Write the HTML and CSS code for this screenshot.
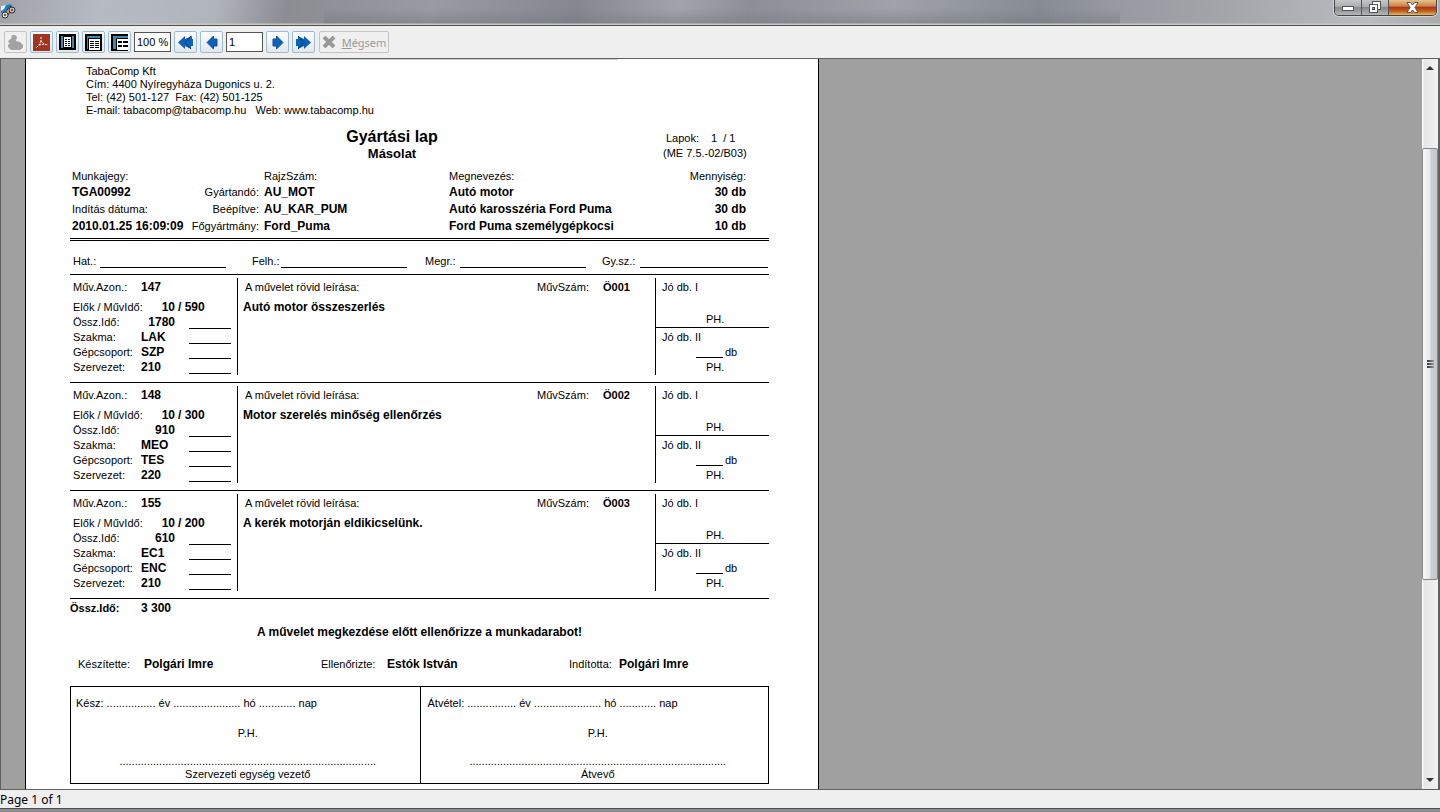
FILE: index.html
```
<!DOCTYPE html>
<html lang="hu">
<head>
    <meta charset="UTF-8">
    <meta name="viewport" content="width=device-width, initial-scale=1.0">
    <title>Gyártási lap</title>
    <link rel="stylesheet" href="styles.css">
</head>
<body>
<header class="titlebar">
    <svg class="app-icon" width="16" height="16" viewBox="0 0 16 16">
        <path d="M1 3L11 1L13 5L9 8L1 10Z" fill="#1d7fd6"/>
        <path d="M1 3L6 2L4 6L1 8Z" fill="#e8f6ff"/>
        <path d="M5 10L10 3L12 5L8 12Z" fill="#e0a860" stroke="#333"/>
        <circle cx="12" cy="7" r="3" fill="#bbb" stroke="#333"/>
        <circle cx="12" cy="7" r="1" fill="#444"/>
        <circle cx="5" cy="12" r="3" fill="#ddd" stroke="#333"/>
        <circle cx="5" cy="12" r="1" fill="#333"/>
    </svg>
    <div class="win-buttons">
        <button class="win-btn" aria-label="Kis méret">
            <svg width="12" height="6" viewBox="0 0 12 6"><rect x=".5" y="1.5" width="11" height="4" fill="#fff" stroke="#555"/></svg>
        </button>
        <button class="win-btn" aria-label="Előző méret">
            <svg width="12" height="13" viewBox="0 0 12 13"><rect x="3.5" y=".5" width="8" height="8" fill="#fff" stroke="#555"/><rect x=".5" y="3.5" width="8" height="8" fill="#fff" stroke="#555"/><rect x="3.5" y="6.5" width="2" height="2" fill="#999" stroke="#555"/></svg>
        </button>
        <button class="win-btn win-close" aria-label="Bezárás">
            <svg width="13" height="11" viewBox="0 0 13 11"><path d="M1 .5H4.500L6.500 3L8.500 .5H12L9 5.500L12 10.500H8.500L6.500 8L4.500 10.500H1L4 5.500Z" fill="#fff" stroke="#555"/></svg>
        </button>
    </div>
</header>

<nav class="toolbar">
    <button class="tool" disabled aria-label="Nyomtatás">
        <svg width="17" height="17" viewBox="0 0 17 17"><path d="M5 1H8L10 3L9 7L13 8L16 11V14L13 16H4L1 13V11L3 9L1 8L2 6L4 5Z" fill="#a3a3a3"/><path d="M14 16L17 13" stroke="#fff"/></svg>
    </button>
    <button class="tool" aria-label="PDF">
        <svg width="17" height="17" viewBox="0 0 17 17"><rect width="17" height="17" fill="#a33420"/><path d="M8 3V7L11 10L15 11M8 7L6 11L3 14M6 11L11 10" fill="none" stroke="#fff" stroke-dasharray="2 1"/></svg>
    </button>
    <button class="tool" aria-label="Teljes oldal">
        <svg width="17" height="17" viewBox="0 0 17 17"><rect x="1" y="1" width="15" height="14" fill="#3d88ad" stroke="#000" stroke-width="2"/><rect x="4.500" y="2.500" width="8" height="11" fill="#fff" stroke="#000"/><path d="M6 5.500H8M9 5.500H11M6 7.500H8M9 7.500H11M6 9.500H8M9 9.500H11M6 11.500H8M9 11.500H11" stroke="#000"/></svg>
    </button>
    <button class="tool" aria-label="Oldalszélesség">
        <svg width="17" height="17" viewBox="0 0 17 17"><rect x="1" y="1" width="15" height="15" fill="#3d88ad" stroke="#000" stroke-width="2"/><rect x="3.500" y="4.500" width="12" height="12" fill="#fff" stroke="#000"/><path d="M5 7.500H9M10 7.500H14M5 9.500H9M10 9.500H14M5 11.500H9M10 11.500H14M5 13.500H9M10 13.500H14" stroke="#000"/></svg>
    </button>
    <button class="tool" aria-label="Nagyítás">
        <svg width="17" height="17" viewBox="0 0 17 17"><path d="M17 1H1V16H17" fill="#3d88ad" stroke="#000" stroke-width="2"/><path d="M17 4.500H5.500V16.500H17" fill="#fff" stroke="#000"/><path d="M7 8H11M12 8H17M7 12H11M12 12H17" stroke="#000" stroke-width="2"/></svg>
    </button>
    <input class="field" type="text" value="100 %" aria-label="Nagyítás mértéke">
    <button class="tool" aria-label="Első oldal">
        <svg width="17" height="15" viewBox="0 0 17 15"><path d="M8 1V4L15 1V4H16V11H14V14L8 11V14L1 7.500Z" fill="#0a62bd"/><path d="M14 1L8 7.500L14 14" fill="none" stroke="#06396f"/></svg>
    </button>
    <button class="tool" aria-label="Előző oldal">
        <svg width="12" height="15" viewBox="0 0 12 15"><path d="M7.500 1V4H11V11H7.500V14L1 7.500Z" fill="#0a62bd" stroke="#0850a0"/></svg>
    </button>
    <input class="field" type="text" value="1" aria-label="Oldal">
    <button class="tool" aria-label="Következő oldal">
        <svg width="12" height="15" viewBox="0 0 12 15"><path d="M4.500 1V4H1V11H4.500V14L11 7.500Z" fill="#0a62bd" stroke="#0850a0"/></svg>
    </button>
    <button class="tool" aria-label="Utolsó oldal">
        <svg width="17" height="15" viewBox="0 0 17 15"><path d="M9 1V4L3 1V4H1V11H3V14L9 11V14L16 7.500Z" fill="#0a62bd"/><path d="M3 1L9 7.500L3 14" fill="none" stroke="#06396f"/></svg>
    </button>
    <button class="tool cancel" disabled>
        <svg width="14" height="12" viewBox="0 0 14 12"><path d="M2 1L12 11M12 1L2 11" stroke="#999" stroke-width="4"/></svg>
        <span><u>M</u>égsem</span>
    </button>
</nav>

<main class="viewer">
    <article class="paper">
        <div class="top-line"></div>
        <section class="head">
            <address class="company">
                TabaComp Kft<br>
                Cím: 4400 Nyíregyháza Dugonics u. 2.<br>
                Tel: (42) 501-127&nbsp; Fax: (42) 501-125<br>
                E-mail: tabacomp@tabacomp.hu &nbsp; Web: www.tabacomp.hu
            </address>
            <div class="title-row">
                <div class="title">
                    <h1>Gyártási lap</h1>
                    <h2>Másolat</h2>
                </div>
                <div class="pages">
                    <p class="page-no"><span>Lapok:</span><span>1 &nbsp;/ 1</span></p>
                    <p>(ME 7.5.-02/B03)</p>
                </div>
            </div>
        </section>

        <section class="info">
            <span>Munkajegy:</span><span></span><span>RajzSzám:</span><span>Megnevezés:</span><span class="qty">Mennyiség:</span>
            <b>TGA00992</b><span class="kind">Gyártandó:</span><b>AU_MOT</b><b>Autó motor</b><b class="qty">30 db</b>
            <span>Indítás dátuma:</span><span class="kind">Beépítve:</span><b>AU_KAR_PUM</b><b>Autó karosszéria Ford Puma</b><b class="qty">30 db</b>
            <b>2010.01.25 16:09:09</b><span class="kind">Főgyártmány:</span><b>Ford_Puma</b><b>Ford Puma személygépkocsi</b><b class="qty">10 db</b>
        </section>

        <section class="marks">
            <span>Hat.:</span><i class="blank"></i>
            <span>Felh.:</span><i class="blank"></i>
            <span>Megr.:</span><i class="blank"></i>
            <span>Gy.sz.:</span><i class="blank"></i>
        </section>

        <section class="step">
            <div class="data">
                <div class="row first"><span>Műv.Azon.:</span><b>147</b></div>
                <div class="row"><span>Elők / MűvIdő:</span><b class="num">10</b><b class="per">/ 590</b></div>
                <div class="row"><span>Össz.Idő:</span><b class="num">1780</b><i class="blank"></i></div>
                <div class="row"><span>Szakma:</span><b>LAK</b><i class="blank"></i></div>
                <div class="row"><span>Gépcsoport:</span><b>SZP</b><i class="blank"></i></div>
                <div class="row"><span>Szervezet:</span><b>210</b><i class="blank"></i></div>
            </div>
            <div class="desc">
                <div class="desc-head"><span>A művelet rövid leírása:</span><span>MűvSzám:</span><strong>Ö001</strong></div>
                <p>Autó motor összeszerlés</p>
            </div>
            <div class="check">
                <div class="good"><p>Jó db. I</p><p class="ph">PH.</p></div>
                <div class="good two"><p>Jó db. II</p><p class="pcs"><i class="blank"></i>db</p><p class="ph">PH.</p></div>
            </div>
        </section>

        <section class="step">
            <div class="data">
                <div class="row first"><span>Műv.Azon.:</span><b>148</b></div>
                <div class="row"><span>Elők / MűvIdő:</span><b class="num">10</b><b class="per">/ 300</b></div>
                <div class="row"><span>Össz.Idő:</span><b class="num">910</b><i class="blank"></i></div>
                <div class="row"><span>Szakma:</span><b>MEO</b><i class="blank"></i></div>
                <div class="row"><span>Gépcsoport:</span><b>TES</b><i class="blank"></i></div>
                <div class="row"><span>Szervezet:</span><b>220</b><i class="blank"></i></div>
            </div>
            <div class="desc">
                <div class="desc-head"><span>A művelet rövid leírása:</span><span>MűvSzám:</span><strong>Ö002</strong></div>
                <p>Motor szerelés minőség ellenőrzés</p>
            </div>
            <div class="check">
                <div class="good"><p>Jó db. I</p><p class="ph">PH.</p></div>
                <div class="good two"><p>Jó db. II</p><p class="pcs"><i class="blank"></i>db</p><p class="ph">PH.</p></div>
            </div>
        </section>

        <section class="step">
            <div class="data">
                <div class="row first"><span>Műv.Azon.:</span><b>155</b></div>
                <div class="row"><span>Elők / MűvIdő:</span><b class="num">10</b><b class="per">/ 200</b></div>
                <div class="row"><span>Össz.Idő:</span><b class="num">610</b><i class="blank"></i></div>
                <div class="row"><span>Szakma:</span><b>EC1</b><i class="blank"></i></div>
                <div class="row"><span>Gépcsoport:</span><b>ENC</b><i class="blank"></i></div>
                <div class="row"><span>Szervezet:</span><b>210</b><i class="blank"></i></div>
            </div>
            <div class="desc">
                <div class="desc-head"><span>A művelet rövid leírása:</span><span>MűvSzám:</span><strong>Ö003</strong></div>
                <p>A kerék motorján eldikicselünk.</p>
            </div>
            <div class="check">
                <div class="good"><p>Jó db. I</p><p class="ph">PH.</p></div>
                <div class="good two"><p>Jó db. II</p><p class="pcs"><i class="blank"></i>db</p><p class="ph">PH.</p></div>
            </div>
        </section>

        <p class="total"><strong>Össz.Idő:</strong><b>3 300</b></p>
        <p class="notice">A művelet megkezdése előtt ellenőrizze a munkadarabot!</p>

        <section class="signers">
            <span>Készítette:</span><b>Polgári Imre</b>
            <span>Ellenőrizte:</span><b>Estók István</b>
            <span>Indította:</span><b>Polgári Imre</b>
        </section>

        <section class="receipt">
            <div class="half">
                <p>Kész: ................ év ...................... hó ............ nap</p>
                <p class="mid">P.H.</p>
                <p class="mid dots">....................................................................................</p>
                <p class="mid">Szervezeti egység vezető</p>
            </div>
            <div class="half">
                <p>Átvétel: ................ év ...................... hó ............ nap</p>
                <p class="mid">P.H.</p>
                <p class="mid dots">....................................................................................</p>
                <p class="mid">Átvevő</p>
            </div>
        </section>
    </article>

    <div class="scrollbar">
        <button class="arrow" aria-label="Fel"><svg width="8" height="5" viewBox="0 0 8 5"><path d="M4 0L8 4H0Z" fill="#333"/></svg></button>
        <div class="track">
            <div class="thumb"><i></i><i></i><i></i></div>
        </div>
        <button class="arrow" aria-label="Le"><svg width="8" height="5" viewBox="0 0 8 5"><path d="M0 0H8L4 4Z" fill="#333"/></svg></button>
    </div>
</main>

<footer class="status">Page 1 of 1</footer>
</body>
</html>
```
FILE: styles.css
```
*{
    box-sizing: border-box;
    margin: 0;
    padding: 0;
}
body{
    display: flex;
    flex-direction: column;
    height: 100vh;
    overflow: hidden;
    background-color: #efefef;
    font: 11px/15px "Liberation Sans", Arial, sans-serif;
    color: #000;
}
svg{
    display: block;
}
b{
    font-size: 12px;
}
i{
    display: block;
}
.blank{
    border-bottom: 1px solid #000;
}

/* title bar */
.titlebar{
    display: flex;
    justify-content: space-between;
    align-items: flex-start;
    flex: none;
    height: 26px;
    padding-right: 3px;
    border-bottom: 1px solid #505050;
    background:
        linear-gradient(rgba(255,255,255,0) 92%, #c8c8c4 96%),
        linear-gradient(rgba(130,134,142,0) 35%, rgba(112,120,128,.55)) 324px 0 / 796px 100% no-repeat,
        linear-gradient(100deg, #a0a2a8 0, #b6bbc3 7%, #b0b4bb 15%, #8c8c93 20%, #9a9ba1 30%, #85878f 40%, #a2a4a9 47%, #8d8f97 52%, #a0a2a8 62%, #888b93 72%, #9799a0 77%, #a2a5aa 85%, #b9bcbf 95%, #a9abad 100%);
}
.app-icon{
    margin-top: 3px;
}
.win-buttons{
    display: flex;
    height: 16px;
    border: 1px solid #444;
    border-top: 0;
    border-radius: 0 0 5px 5px;
    overflow: hidden;
    box-shadow: 0 0 0 1px #d5d5d5;
}
.win-btn{
    display: flex;
    justify-content: center;
    align-items: center;
    width: 27px;
    border: 0;
    border-right: 1px solid #555;
    background: linear-gradient(#c4c6c8, #aaacae 45%, #85878a 50%, #b5b7b9);
}
.win-close{
    width: 47px;
    border: 0;
    background: linear-gradient(#e5c58c, #cf8050 40%, #a83c12 50%, #c45f1c 75%, #e8b860);
}

/* toolbar */
.toolbar{
    display: flex;
    align-items: center;
    flex: none;
    gap: 3px;
    height: 32px;
    padding-left: 4px;
}
.tool{
    display: flex;
    justify-content: center;
    align-items: center;
    width: 23px;
    height: 22px;
    border: 1px solid #9dbcd8;
    border-radius: 2px;
    background: linear-gradient(#fdfdfd, #e4e6e8);
}
.tool:disabled{
    border-color: #c4c4c4;
    background: #f0f0f0;
    color: #999;
}
.field{
    width: 37px;
    height: 20px;
    padding-left: 2px;
    border: 1px solid #555;
    background-color: #fff;
    font: 11px "Liberation Sans", Arial, sans-serif;
}
.cancel{
    gap: 6px;
    width: 70px;
    margin-left: 1px;
    font: 11px "Noto Sans", Tahoma, sans-serif;
}

/* viewer */
.viewer{
    display: flex;
    flex: 1;
    min-height: 0;
    border: 1px solid #606060;
    border-right-width: 2px;
    background-color: #a0a0a0;
    overflow: hidden;
}
.paper{
    flex: none;
    width: 794px;
    margin-left: 24px;
    padding: 0 49px 0 44px;
    border: 1px solid #000;
    border-width: 0 1px;
    background-color: #fff;
}
.top-line{
    width: 548px;
    height: 1px;
    background-color: #c8d0d8;
}
.company{
    padding: 5px 0 0 16px;
    font-style: normal;
    line-height: 13px;
}
.title-row{
    display: grid;
    grid-template-columns: 186px 272px 135px 1fr;
    padding-top: 10px;
}
.title{
    grid-column: 2;
    text-align: center;
}
.title h1{
    font-size: 16px;
    line-height: 19px;
}
.title h2{
    font-size: 13px;
    line-height: 15px;
}
.pages{
    grid-column: 4;
    padding-top: 4px;
}
.page-no{
    display: flex;
    gap: 12px;
    padding-left: 3px;
}
.info{
    display: grid;
    grid-template-columns: 118px 69px 185px 200px 1fr;
    grid-template-rows: 16px;
    grid-auto-rows: 17px;
    align-items: center;
    padding: 7px 23px 3px 2px;
    border-bottom: 3px double #000;
}
.info > :nth-child(5n+3),
.info > :nth-child(5n+4){
    padding-left: 5px;
}
.info .kind{
    justify-self: end;
}
.info .qty{
    justify-self: end;
    white-space: nowrap;
}
.marks{
    display: grid;
    grid-template-columns: 27px 152px 29px 144px 35px 142px 38px 1fr;
    padding: 13px 0 5px 3px;
}
.marks .blank{
    width: 126px;
    height: 14px;
}
.marks .blank:last-child{
    width: 128px;
}

/* operations */
.step{
    display: grid;
    grid-template-columns: 167px 418px 1fr;
    padding: 3px 0 7px;
    border-top: 1px solid #000;
}
.row{
    display: grid;
    grid-template-columns: 68px 34px 14px 42px;
    padding-left: 3px;
    white-space: nowrap;
}
.row.first, .desc-head{
    line-height: 19px;
    margin-bottom: 3px;
}
.row .num{
    text-align: right;
}
.row .per{
    grid-column: 3 / 5;
    padding-left: 3px;
}
.row .blank{
    grid-column: 4;
    height: 14px;
}
.desc{
    padding-left: 5px;
    border-left: 1px solid #000;
}
.desc-head{
    display: grid;
    grid-template-columns: 292px 66px 1fr;
    padding-left: 2px;
}
.desc p{
    font-size: 12px;
    font-weight: bold;
}
.check{
    border-left: 1px solid #000;
}
.good{
    display: flex;
    flex-direction: column;
    justify-content: space-between;
    height: 50px;
    padding: 2px 6px 0;
    border-bottom: 1px solid #000;
}
.good.two{
    height: 47px;
    border-bottom: 0;
}
.ph{
    padding-left: 44px;
}
.pcs{
    display: flex;
    gap: 2px;
    padding-left: 34px;
}
.pcs .blank{
    width: 27px;
    height: 13px;
}

/* bottom of the sheet */
.total{
    display: grid;
    grid-template-columns: 71px 1fr;
    padding-top: 2px;
    border-top: 1px solid #000;
}
.notice{
    padding-top: 9px;
    font-size: 12px;
    font-weight: bold;
    text-align: center;
}
.signers{
    display: grid;
    grid-template-columns: 66px 177px 66px 182px 50px 1fr;
    padding: 17px 0 14px 8px;
}
.receipt{
    display: grid;
    grid-template-columns: 1fr 1fr;
    border: 1px solid #000;
}
.half{
    padding: 9px 0 3px 5px;
}
.half + .half{
    padding-left: 7px;
    border-left: 1px solid #000;
}
.half .mid{
    margin: 15px 0 13px;
    text-align: center;
}
.half .dots{
    margin: 0;
}
.half .mid:last-child{
    margin: 0;
    line-height: 11px;
}

/* scrollbar */
.scrollbar{
    display: flex;
    flex-direction: column;
    width: 16px;
    margin-left: auto;
    background: linear-gradient(90deg, #fff, #e6e6e6 15%, #f2f2f2);
}
.arrow{
    display: flex;
    justify-content: center;
    align-items: center;
    height: 18px;
    border: 0;
    background: none;
}
.track{
    flex: 1;
    display: grid;
    grid-template-rows: 71fr 432fr 191fr;
}
.thumb{
    grid-row: 2;
    display: flex;
    flex-direction: column;
    justify-content: center;
    align-items: center;
    gap: 1px;
    border: 1px solid #888;
    border-radius: 2px;
    background: linear-gradient(90deg, #fafafa, #e8e9ea 45%, #ccd0d3 60%, #c4c7c9);
}
.thumb i{
    width: 7px;
    height: 2px;
    background: linear-gradient(90deg, #333, #999);
}

/* status bar */
.status{
    flex: none;
    height: 22px;
    border-bottom: 3px solid #8b8d90;
    box-shadow: inset 0 -1px 0 #505050;
    font: 12px/19px "Noto Sans", Tahoma, sans-serif;
}
```
